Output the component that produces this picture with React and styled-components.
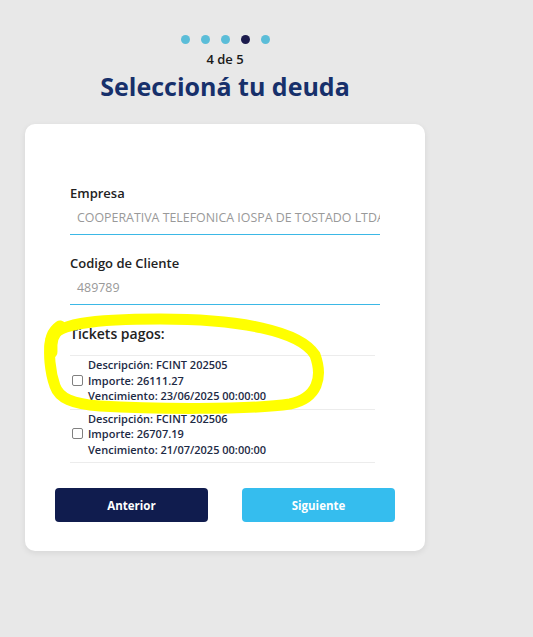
import styled, { createGlobalStyle } from "styled-components";

const GlobalStyle = createGlobalStyle`
  body {
    margin: 0;
    background: #e8e8e8;
    font-family: "Open Sans", "Noto Sans", sans-serif;
  }
`;

const Page = styled.div`
  position: relative;
  width: 400px;
  padding: 35px 0 85px 25px;
`;

const Stepper = styled.div`
  display: flex;
  flex-direction: column;
  align-items: center;
`;

const Dots = styled.div`
  display: flex;
  gap: 11px;
`;

const Dot = styled.span`
  width: 9px;
  height: 9px;
  border-radius: 50%;
  background: ${(p) => (p.$active ? "#1c1b4d" : "#5bbdd8")};
`;

const StepText = styled.div`
  margin-top: 6px;
  font-size: 13px;
  font-weight: 600;
  color: #1a1a1a;
  line-height: 18px;
`;

const Title = styled.h1`
  margin: 1px 0 0;
  font-size: 25px;
  font-weight: 700;
  color: #17306b;
  line-height: 34px;
`;

const Card = styled.div`
  margin-top: 21px;
  background: #fff;
  border-radius: 10px;
  box-shadow: 0 2px 6px rgba(0, 0, 0, 0.08);
  padding: 60px 30px 29px;
`;

const Fields = styled.div`
  padding: 0 15px;
`;

const Field = styled.div`
  margin-bottom: 19px;
`;

const Label = styled.div`
  font-size: 13px;
  font-weight: 600;
  color: #222;
  line-height: 19px;
`;

const Input = styled.div`
  margin-top: 6px;
  padding: 0 7px 7px;
  font-size: 12.4px;
  color: #999;
  line-height: 18px;
  border-bottom: 1px solid #3bb8e6;
  white-space: nowrap;
  overflow: hidden;
`;

const Section = styled.div`
  font-size: 14px;
  font-weight: 600;
  color: #222;
  line-height: 20px;
  padding-bottom: 11px;
`;

const Ticket = styled.label`
  display: flex;
  align-items: center;
  gap: 5px;
  margin-right: 5px;
  padding: 1px 0 5px 2px;
  border-top: 1px solid #ececec;
  &:last-child {
    border-bottom: 1px solid #ececec;
  }
`;

const Box = styled.span`
  width: 9px;
  height: 9px;
  border: 1px solid #808080;
  border-radius: 2px;
`;

const Lines = styled.div`
  font-size: 11px;
  font-weight: 600;
  line-height: 15.5px;
  color: #1d2a45;
`;

const Actions = styled.div`
  display: flex;
  justify-content: space-between;
  margin-top: 25px;
`;

const Button = styled.button`
  width: 153px;
  height: 34px;
  border: none;
  border-radius: 4px;
  background: ${(p) => (p.$primary ? "#35bdee" : "#101c4e")};
  color: #fff;
  font-family: inherit;
  font-size: 11.5px;
  font-weight: 700;
`;

const Scribble = styled.svg`
  position: absolute;
  left: 0;
  top: 0;
  pointer-events: none;
`;

const tickets = [
  { desc: "FCINT 202505", imp: "26111.27", venc: "23/06/2025 00:00:00" },
  { desc: "FCINT 202506", imp: "26707.19", venc: "21/07/2025 00:00:00" },
];

export default function App() {
  return (
    <Page>
      <GlobalStyle />
      <Stepper>
        <Dots>
          {[0, 1, 2, 3, 4].map((i) => (
            <Dot key={i} $active={i === 3} />
          ))}
        </Dots>
        <StepText>4 de 5</StepText>
        <Title>Seleccioná tu deuda</Title>
      </Stepper>
      <Card>
        <Fields>
          <Field>
            <Label>Empresa</Label>
            <Input>COOPERATIVA TELEFONICA IOSPA DE TOSTADO LTDA</Input>
          </Field>
          <Field>
            <Label>Codigo de Cliente</Label>
            <Input>489789</Input>
          </Field>
          <Section>Tickets pagos:</Section>
          {tickets.map((t) => (
            <Ticket key={t.desc}>
              <Box />
              <Lines>
                <div>Descripción: {t.desc}</div>
                <div>Importe: {t.imp}</div>
                <div>Vencimiento: {t.venc}</div>
              </Lines>
            </Ticket>
          ))}
        </Fields>
        <Actions>
          <Button>Anterior</Button>
          <Button $primary>Siguiente</Button>
        </Actions>
      </Card>
      <Scribble width="533" height="637" viewBox="0 0 533 637">
        <g fill="none" stroke="#ffff00" strokeLinecap="round">
          <path
            strokeWidth="11"
            d="M55 386 C50 372 48 352 51 340 C54 324 92 319 160 319 C240 319 300 331 315 355 C323 377 318 398 290 404 C250 410 150 409 100 406 C72 404 59 398 55 386"
          />
          <path strokeWidth="13" d="M51 352 C50 340 53 332 60 327" />
        </g>
      </Scribble>
    </Page>
  );
}
